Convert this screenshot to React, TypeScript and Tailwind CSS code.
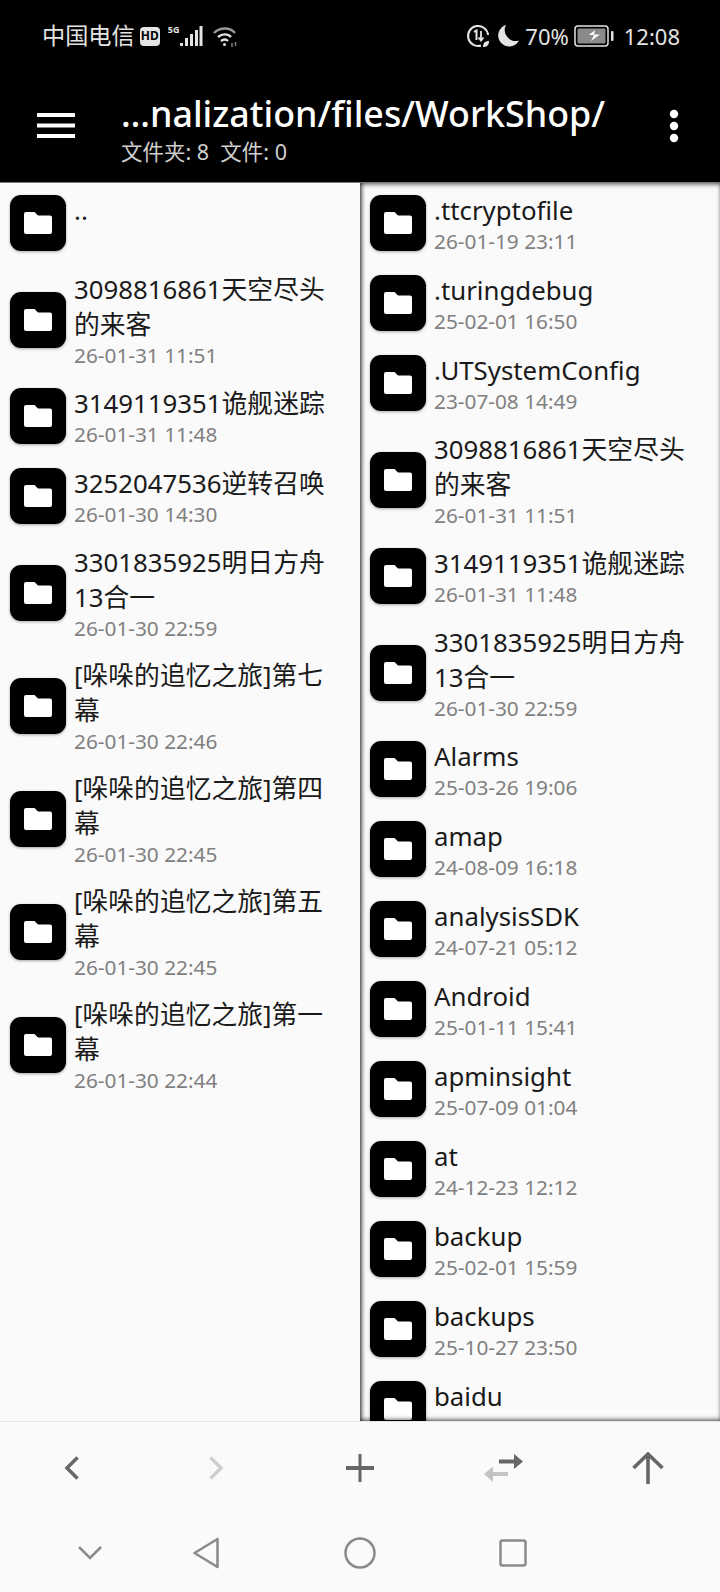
const FONT = "font-['Noto_Sans','Noto_Sans_CJK_SC',sans-serif]"

type Entry = { name: string; date?: string }

const leftEntries: Entry[] = [
  { name: '..' },
  { name: '3098816861天空尽头的来客', date: '26-01-31 11:51' },
  { name: '3149119351诡舰迷踪', date: '26-01-31 11:48' },
  { name: '3252047536逆转召唤', date: '26-01-30 14:30' },
  { name: '3301835925明日方舟13合一', date: '26-01-30 22:59' },
  { name: '[哚哚的追忆之旅]第七幕', date: '26-01-30 22:46' },
  { name: '[哚哚的追忆之旅]第四幕', date: '26-01-30 22:45' },
  { name: '[哚哚的追忆之旅]第五幕', date: '26-01-30 22:45' },
  { name: '[哚哚的追忆之旅]第一幕', date: '26-01-30 22:44' },
]

const rightEntries: Entry[] = [
  { name: '.ttcryptofile', date: '26-01-19 23:11' },
  { name: '.turingdebug', date: '25-02-01 16:50' },
  { name: '.UTSystemConfig', date: '23-07-08 14:49' },
  { name: '3098816861天空尽头的来客', date: '26-01-31 11:51' },
  { name: '3149119351诡舰迷踪', date: '26-01-31 11:48' },
  { name: '3301835925明日方舟13合一', date: '26-01-30 22:59' },
  { name: 'Alarms', date: '25-03-26 19:06' },
  { name: 'amap', date: '24-08-09 16:18' },
  { name: 'analysisSDK', date: '24-07-21 05:12' },
  { name: 'Android', date: '25-01-11 15:41' },
  { name: 'apminsight', date: '25-07-09 01:04' },
  { name: 'at', date: '24-12-23 12:12' },
  { name: 'backup', date: '25-02-01 15:59' },
  { name: 'backups', date: '25-10-27 23:50' },
  { name: 'baidu', date: '24-01-08 08:08' },
]

function FolderIcon() {
  return (
    <div className="flex h-14 w-14 shrink-0 items-center justify-center rounded-[11px] bg-black shadow-[0_1px_3px_rgba(0,0,0,0.35)]">
      <svg width="28" height="22" viewBox="0 0 28 22" fill="#fff">
        <path d="M2 0h8.500l3.500 3.500h12a2 2 0 0 1 2 2V20a2 2 0 0 1-2 2H2a2 2 0 0 1-2-2V2a2 2 0 0 1 2-2z" />
      </svg>
    </div>
  )
}

function Row({ entry }: { entry: Entry }) {
  return (
    <div className="flex min-h-20 items-center py-[10px] pl-[10px] pr-7">
      <FolderIcon />
      <div className="ml-2 min-w-0 flex-1 -translate-y-px">
        <div className="break-all text-[25.8px] leading-[34.5px] text-[#1a1a1a]">{entry.name}</div>
        <div className="h-6 whitespace-nowrap text-[20.8px] leading-[28px] text-[#808080]">{entry.date}</div>
      </div>
    </div>
  )
}

function StatusBar() {
  return (
    <div className="flex h-[72px] items-center justify-between pl-[42px] pr-10 text-[22px] text-[#e4e4e4]">
      <div className="flex items-center">
        <span className="text-[23.200px] leading-none">中国电信</span>
        <span className="ml-[5px] flex h-[19px] w-5 items-center justify-center rounded-[4px] bg-[#e4e4e4] text-[12px] font-bold leading-none text-black">
          HD
        </span>
        <span className="ml-2 -mt-[13px] text-[9px] font-bold leading-none">5G</span>
        <svg className="ml-[1px]" width="23" height="22" viewBox="0 0 23 22" fill="#e4e4e4">
          <rect x="0" y="18" width="3" height="3" />
          <rect x="5" y="13" width="3" height="8" />
          <rect x="10" y="9" width="3" height="12" />
          <rect x="15" y="5" width="3" height="16" />
          <rect x="19.500" y="1" width="3" height="20" />
        </svg>
        <svg className="ml-[9px]" width="26" height="24" viewBox="0 0 26 24" fill="none" stroke="#e4e4e4" strokeWidth="2.400">
          <path d="M2 9c6-6 16-6 21 0" stroke="#9a9a9a" />
          <path d="M6 13c4-3.500 10-3.500 13 0" />
          <path d="M9 17c2.500-2 5-2 7 0" />
          <circle cx="12.500" cy="20.500" r="1.500" fill="#e4e4e4" stroke="none" />
          <path d="M20 19v4M23.500 18v4" stroke="#808080" strokeWidth="1.500" />
        </svg>
      </div>
      <div className="flex items-center">
        <svg width="24" height="24" viewBox="0 0 24 24" fill="none" stroke="#e4e4e4" strokeWidth="2">
          <path d="M15 21.500A10 10 0 1 1 22 11" />
          <path d="M8 8l2.500-1.500V16" />
          <path d="M15 7v9M12.500 13.500L15 16.500l2.500-3" strokeWidth="1.800" />
          <path d="M17 23c0-4 2-6 6-6 0 4-2 6-6 6z" fill="#e4e4e4" stroke="none" />
        </svg>
        <svg className="ml-2" width="21" height="22" viewBox="0 0 21 22" fill="#e4e4e4">
          <path d="M8 0a11 11 0 0 0 13 15.500A11 11 0 1 1 8 0z" />
        </svg>
        <span className="ml-[6px] leading-none">70%</span>
        <svg className="ml-[5px]" width="41" height="22" viewBox="0 0 41 22" fill="none">
          <rect x="1" y="1" width="33" height="20" rx="3" stroke="#e4e4e4" strokeWidth="1.500" />
          <rect x="3.500" y="3.500" width="28" height="15" rx="1" fill="#8a8a8a" />
          <path d="M21 5l-6 5h5l-3 6 9-6.500h-6z" fill="#fff" />
          <rect x="37" y="6" width="2.500" height="10" rx="1" fill="#e4e4e4" />
        </svg>
        <span className="ml-[9px] leading-none">12:08</span>
      </div>
    </div>
  )
}

function Header() {
  return (
    <div className="h-[183px] shrink-0 border-b border-b-[#777] bg-black">
      <StatusBar />
      <div className="flex h-[110px] items-start">
        <svg className="ml-[37px] mt-[41px] shrink-0" width="38" height="25" viewBox="0 0 38 25" fill="#fff">
          <rect y="0" width="38" height="4" />
          <rect y="10.500" width="38" height="4" />
          <rect y="21" width="38" height="4" />
        </svg>
        <div className="ml-[46px] w-[515px]">
          <div className="mt-[18px] whitespace-nowrap text-[35.800px] font-medium leading-[46px] text-white">…nalization/files/WorkShop/</div>
          <div className="mt-[3px] text-[21.500px] leading-[26px] text-[#cfcfcf]">
            文件夹: 8&nbsp;&nbsp;文件: 0
          </div>
        </div>
        <svg className="ml-[33px] mt-[37px] shrink-0" width="10" height="34" viewBox="0 0 10 34" fill="#fff">
          <circle cx="5" cy="5" r="4.200" />
          <circle cx="5" cy="17" r="4.200" />
          <circle cx="5" cy="29" r="4.200" />
        </svg>
      </div>
    </div>
  )
}

function Toolbar() {
  return (
    <div className="grid h-[92px] shrink-0 grid-cols-5 items-center border-t border-t-[#e6e6e6]">
      <div className="flex justify-center">
        <svg width="16" height="24" viewBox="0 0 16 24" fill="none" stroke="#666" strokeWidth="3.500">
          <path d="M13.500 1.500L3 12l10.500 10.500" />
        </svg>
      </div>
      <div className="flex justify-center">
        <svg width="16" height="24" viewBox="0 0 16 24" fill="none" stroke="#cfcfcf" strokeWidth="3.500">
          <path d="M2.500 1.500L13 12 2.500 22.500" />
        </svg>
      </div>
      <div className="flex justify-center">
        <svg width="28" height="28" viewBox="0 0 28 28" fill="#666">
          <rect x="12.500" y="0" width="3" height="28" />
          <rect x="0" y="12" width="28" height="4" />
        </svg>
      </div>
      <div className="flex justify-center">
        <svg width="40" height="30" viewBox="0 0 40 30">
          <path d="M15 6.500h15V1l9 7.500-9 7.500v-5.500H15z" fill="#666" />
          <path d="M24 19h-15v-5.500L0 21l9 8v-6h15z" fill="#c4c4c4" />
        </svg>
      </div>
      <div className="flex justify-center">
        <svg width="32" height="32" viewBox="0 0 32 32" fill="none" stroke="#666" strokeWidth="3.600">
          <path d="M16 32V2M1.500 16L16 2l14.500 14" />
        </svg>
      </div>
    </div>
  )
}

function NavBar() {
  return (
    <div className="flex h-[79px] shrink-0 items-center pl-[78px]">
      <svg width="24" height="14" viewBox="0 0 24 14" fill="none" stroke="#8a8a8a" strokeWidth="2.500">
        <path d="M1 1l11 11L23 1" />
      </svg>
      <svg className="ml-[91px]" width="26" height="32" viewBox="0 0 26 32" fill="none" stroke="#8a8a8a" strokeWidth="2.500" strokeLinejoin="round">
        <path d="M24.500 2L1.500 16l23 14z" />
      </svg>
      <svg className="ml-[125px]" width="32" height="32" viewBox="0 0 32 32" fill="none" stroke="#8a8a8a" strokeWidth="2.500">
        <circle cx="16" cy="16" r="14.500" />
      </svg>
      <svg className="ml-[123px]" width="28" height="28" viewBox="0 0 28 28" fill="none" stroke="#8a8a8a" strokeWidth="2.500">
        <rect x="1.500" y="1.500" width="25" height="25" rx="2" />
      </svg>
    </div>
  )
}

export default function App() {
  return (
    <div className={`${FONT} flex h-[1592px] w-[720px] flex-col overflow-hidden bg-[#fafafa]`}>
      <Header />
      <div className="flex min-h-0 flex-1">
        <div className="w-[360px] shrink-0">
          {leftEntries.map((entry) => (
            <Row key={entry.name} entry={entry} />
          ))}
        </div>
        <div className="relative min-w-0 flex-1 overflow-hidden">
          {rightEntries.map((entry) => (
            <Row key={entry.name} entry={entry} />
          ))}
          {/* panel edge shadow sits over the rows */}
          <div className="pointer-events-none absolute inset-0 shadow-[inset_3px_0_4px_-1px_rgba(0,0,0,0.6),inset_0_3px_4px_-1px_rgba(0,0,0,0.4),inset_0_-3px_4px_-1px_rgba(0,0,0,0.45)]" />
        </div>
      </div>
      <Toolbar />
      <NavBar />
    </div>
  )
}
